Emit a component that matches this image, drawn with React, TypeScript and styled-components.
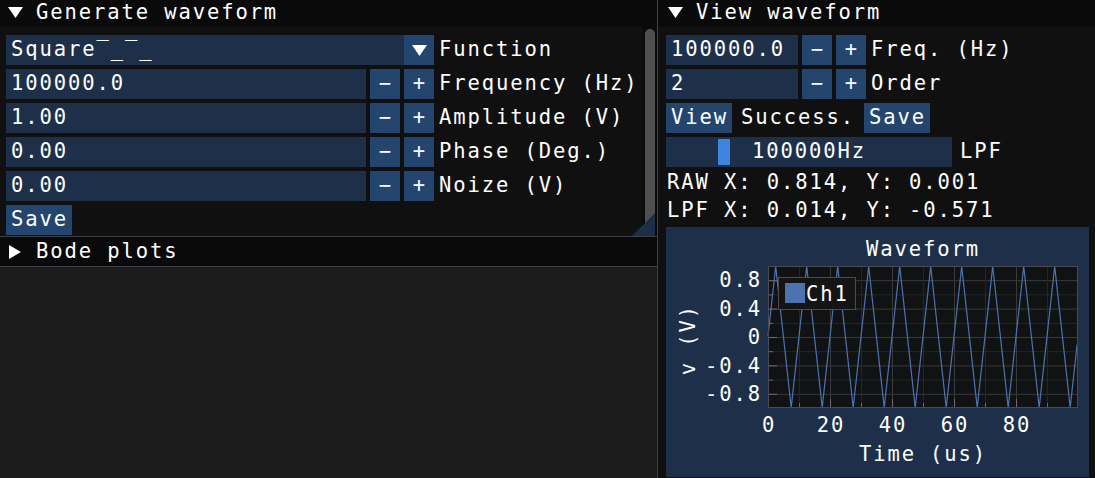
import styled, { createGlobalStyle } from 'styled-components';

const GlobalStyle = createGlobalStyle`
	html, body {
		margin: 0;
		padding: 0;
		background: #1c1c1c;
		overflow: hidden;
	}
`;

const Screen = styled.div`
	width: 1095px;
	height: 478px;
	overflow: hidden;
	background: #1c1c1c;
	font-family: 'DejaVu Sans Mono', 'Liberation Mono', monospace;
	font-size: 20.5px;
	line-height: 24px;
	letter-spacing: 1.9px;
	color: #ffffff;
`;

const Desk = styled.div`
	display: flex;
	height: 482px;
	margin: -2px 0 0 -2px;
`;

const LeftColumn = styled.div`
	width: 659px;
	flex-shrink: 0;
	display: flex;
	flex-direction: column;
`;

const Window = styled.section<{ $grow?: boolean }>`
	display: flex;
	flex-direction: column;
	background: #101010;
	flex: ${({ $grow }) => ($grow ? 1 : 'none')};
	border-bottom: ${({ $grow }) => ($grow ? 'none' : '1px solid #3f3f48')};
	border-left: ${({ $grow }) => ($grow ? '1px solid #3f3f48' : 'none')};
`;

const TitleBar = styled.header`
	height: 29px;
	box-sizing: border-box;
	padding: 0 0 2px 10px;
	flex-shrink: 0;
	display: flex;
	align-items: center;
	gap: 13px;
	background: #0a0a0a;
	white-space: nowrap;

	svg {
		margin-top: 2px;
	}
`;

const WindowBody = styled.div<{ $height?: number }>`
	position: relative;
	display: flex;
	flex: ${({ $height }) => ($height ? 'none' : 1)};
	height: ${({ $height }) => ($height ? `${$height}px` : 'auto')};
`;

const Content = styled.div<{ $right?: number }>`
	flex: 1;
	min-width: 0;
	display: flex;
	flex-direction: column;
	gap: 4px;
	padding: 8px ${({ $right }) => $right ?? 0}px 0 8px;
`;

const Row = styled.div<{ $gap?: number }>`
	display: flex;
	align-items: center;
	gap: ${({ $gap }) => $gap ?? 4}px;
	height: 30px;
	flex-shrink: 0;
	white-space: nowrap;
`;

const Frame = styled.div<{ $width: number }>`
	width: ${({ $width }) => $width}px;
	height: 30px;
	box-sizing: border-box;
	padding: 0 0 2px 5px;
	display: flex;
	align-items: center;
	background: #1d2f49;
	flex-shrink: 0;
	overflow: hidden;
`;

const Combo = styled.div`
	display: flex;
	width: 428px;
	flex-shrink: 0;
`;

const ComboArrow = styled.div`
	width: 30px;
	height: 30px;
	background: #24466e;
	display: flex;
	align-items: center;
	justify-content: center;
`;

const Button = styled.div<{ $square?: boolean }>`
	height: 30px;
	box-sizing: border-box;
	width: ${({ $square }) => ($square ? '30px' : 'auto')};
	padding: ${({ $square }) => ($square ? '0 0 2px' : '0 4px 2px 5px')};
	letter-spacing: ${({ $square }) => ($square ? '0' : '1.9px')};
	background: #24466e;
	display: flex;
	align-items: center;
	justify-content: center;
	flex-shrink: 0;
`;

const Label = styled.span<{ $indent?: number }>`
	margin-left: ${({ $indent }) => $indent ?? 0}px;
	padding-bottom: 2px;
`;

const TextLine = styled.div`
	height: 24px;
	white-space: pre;
	flex-shrink: 0;
	padding-left: 1px;
	margin-top: -1px;
	margin-bottom: 1px;
`;

const ScrollTrack = styled.div`
	width: 15px;
	box-sizing: border-box;
	padding: 2px 2px 8px 3px;
	background: #0b0b0b;
	display: flex;
`;

const ScrollGrab = styled.div`
	flex: 1;
	background: #4f4f4f;
	border-radius: 5px;
`;

const ResizeGrip = styled.svg`
	position: absolute;
	right: 2px;
	bottom: 0;
`;

const SliderTrack = styled.div<{ $width: number }>`
	position: relative;
	width: ${({ $width }) => $width}px;
	height: 30px;
	box-sizing: border-box;
	padding-bottom: 2px;
	background: #1d2f49;
	display: flex;
	align-items: center;
	justify-content: center;
	flex-shrink: 0;
`;

const SliderGrab = styled.div`
	position: absolute;
	top: 2px;
	bottom: 2px;
	width: 12px;
	background: #3d85e0;
`;

const SliderText = styled.span`
	position: relative;
`;

const PlotFrame = styled.div`
	height: 250px;
	flex-shrink: 0;
	box-sizing: border-box;
	padding: 10px 0 0 10px;
	background: #1d2f49;
	display: flex;
	flex-direction: column;
`;

const PlotCaption = styled.div<{ $top?: number }>`
	margin: ${({ $top }) => $top ?? 0}px 0 0 92px;
	width: 310px;
	height: 24px;
	text-align: center;
	white-space: nowrap;
`;

const PlotMiddle = styled.div`
	display: flex;
	height: 176px;
	margin-top: 1px;
`;

const YAxisLabel = styled.div`
	width: 24px;
	height: 156px;
	display: flex;
	align-items: center;
	justify-content: center;
`;

const YAxisText = styled.span`
	writing-mode: vertical-rl;
	transform: rotate(180deg);
	white-space: nowrap;
`;

const Arrow = ({ dir }: { dir: 'down' | 'right' }) =>
	dir === 'down' ? (
		<svg width='15' height='11' viewBox='0 0 15 11'>
			<polygon points='0,0 15,0 7.5,11' fill='#fff' />
		</svg>
	) : (
		<svg width='15' height='14' viewBox='0 0 15 14'>
			<polygon points='1,0 13,7 1,14' fill='#fff' />
		</svg>
	);

const Stepper = () => (
	<>
		<Button $square>−</Button>
		<Button $square>+</Button>
	</>
);

const NumberRow = ({ value, label, width }: { value: string; label: string; width: number }) => (
	<Row>
		<Frame $width={width}>{value}</Frame>
		<Stepper />
		<Label $indent={1}>{label}</Label>
	</Row>
);

// plot geometry (svg coordinates)
const PX0 = 68;
const PX1 = 378;
const PY0 = 4;
const PY1 = 146;
const xs = (t: number) => PX0 + (t / 100) * (PX1 - PX0);
const ys = (v: number) => (PY0 + PY1) / 2 - v * ((PY1 - PY0) / 2);

const wave = (t: number) => {
	const p = (((t - 2.47) % 10) + 10) % 10;
	return 0.995 - 0.398 * Math.min(p, 10 - p);
};

const wavePoints = () => {
	const ts = [0];
	for (let k = 0; k < 10; k++) ts.push(2.47 + k * 10, 7.47 + k * 10);
	ts.push(99.7);
	return ts.map((t) => `${xs(t).toFixed(1)},${ys(wave(t)).toFixed(1)}`).join(' ');
};

const WaveformChart = () => {
	const yTicks = [-0.8, -0.6, -0.4, -0.2, 0, 0.2, 0.4, 0.6, 0.8];
	const xTicks = [10, 20, 30, 40, 50, 60, 70, 80, 90];
	const isMajorY = (v: number) => Math.round(v * 10) % 4 === 0;
	return (
		<svg width='382' height='176' viewBox='0 0 382 176'>
			<rect x={PX0} y={PY0} width={PX1 - PX0} height={PY1 - PY0} fill='#111214' />
			{yTicks.map((v) => (
				<line
					key={`gy${v}`}
					x1={PX0}
					x2={PX1}
					y1={ys(v) + 0.5}
					y2={ys(v) + 0.5}
					stroke={isMajorY(v) ? '#3a3a3c' : '#262628'}
				/>
			))}
			{xTicks.map((t) => (
				<line
					key={`gx${t}`}
					x1={xs(t) + 0.5}
					x2={xs(t) + 0.5}
					y1={PY0}
					y2={PY1}
					stroke={t % 20 === 0 ? '#3a3a3c' : '#262628'}
				/>
			))}
			{yTicks.map((v) => (
				<line
					key={`ty${v}`}
					x1={PX0}
					x2={PX0 + (isMajorY(v) ? 9 : 5)}
					y1={ys(v) + 0.5}
					y2={ys(v) + 0.5}
					stroke='#6a6a6e'
				/>
			))}
			{[0, ...xTicks].map((t) => (
				<line
					key={`tx${t}`}
					x1={xs(t) + 0.5}
					x2={xs(t) + 0.5}
					y1={PY1}
					y2={PY1 - (t % 20 === 0 ? 9 : 5)}
					stroke='#6a6a6e'
				/>
			))}
			<polyline points={wavePoints()} fill='none' stroke='#4c72b0' strokeWidth='1.2' />
			<rect
				x={PX0 + 0.5}
				y={PY0 + 0.5}
				width={PX1 - PX0 - 1}
				height={PY1 - PY0 - 1}
				fill='none'
				stroke='#4a4a50'
			/>
			{[0.8, 0.4, 0, -0.4, -0.8].map((v) => (
				<text key={`ly${v}`} x='62' y={ys(v) + 7.2} textAnchor='end' fill='#fff'>
					{v === 0 ? '0' : v.toFixed(1)}
				</text>
			))}
			{[0, 20, 40, 60, 80].map((t) => (
				<text key={`lx${t}`} x={xs(t) + 1} y='170' textAnchor='middle' fill='#fff'>
					{t}
				</text>
			))}
			<rect x='78.5' y='15.5' width='77' height='32' fill='#141414' stroke='#4a4a50' />
			<rect x='85' y='21' width='20' height='20' fill='#4c72b0' />
			<text x='106' y='38.5' fill='#fff'>
				Ch1
			</text>
		</svg>
	);
};

const App = () => {
	const lpf = { value: 100000, min: 0, max: 540000, width: 286 };
	const grabLeft = 2 + ((lpf.value - lpf.min) / (lpf.max - lpf.min)) * (lpf.width - 16);

	return (
		<Screen>
			<GlobalStyle />
			<Desk>
				<LeftColumn>
					<Window>
						<TitleBar>
							<Arrow dir='down' />
							<span>Generate waveform</span>
						</TitleBar>
						<WindowBody $height={209}>
							<Content>
								<Row>
									<Combo>
										<Frame $width={398}>Square‾_‾_</Frame>
										<ComboArrow>
											<Arrow dir='down' />
										</ComboArrow>
									</Combo>
									<Label $indent={1}>Function</Label>
								</Row>
								<NumberRow value='100000.0' label='Frequency (Hz)' width={360} />
								<NumberRow value='1.00' label='Amplitude (V)' width={360} />
								<NumberRow value='0.00' label='Phase (Deg.)' width={360} />
								<NumberRow value='0.00' label='Noize (V)' width={360} />
								<Row>
									<Button>Save</Button>
								</Row>
							</Content>
							<ScrollTrack>
								<ScrollGrab />
							</ScrollTrack>
							<ResizeGrip width='23' height='23' viewBox='0 0 23 23'>
								<polygon points='0,23 23,23 23,0' fill='#1d2f47' />
							</ResizeGrip>
						</WindowBody>
					</Window>
					<Window>
						<TitleBar>
							<Arrow dir='right' />
							<span>Bode plots</span>
						</TitleBar>
					</Window>
				</LeftColumn>
				<Window $grow>
					<TitleBar>
						<Arrow dir='down' />
						<span>View waveform</span>
					</TitleBar>
					<WindowBody>
						<Content $right={6}>
							<NumberRow value='100000.0' label='Freq. (Hz)' width={132} />
							<NumberRow value='2' label='Order' width={132} />
							<Row $gap={9}>
								<Button>View</Button>
								<Label>Success.</Label>
								<Button>Save</Button>
							</Row>
							<Row $gap={8}>
								<SliderTrack $width={lpf.width}>
									<SliderGrab style={{ left: grabLeft }} />
									<SliderText>{lpf.value}Hz</SliderText>
								</SliderTrack>
								<Label>LPF</Label>
							</Row>
							<TextLine>RAW X: 0.814, Y: 0.001</TextLine>
							<TextLine>LPF X: 0.014, Y: -0.571</TextLine>
							<PlotFrame>
								<PlotCaption>Waveform</PlotCaption>
								<PlotMiddle>
									<YAxisLabel>
										<YAxisText>v (V)</YAxisText>
									</YAxisLabel>
									<WaveformChart />
								</PlotMiddle>
								<PlotCaption $top={4}>Time (us)</PlotCaption>
							</PlotFrame>
						</Content>
					</WindowBody>
				</Window>
			</Desk>
		</Screen>
	);
};

export default App;
